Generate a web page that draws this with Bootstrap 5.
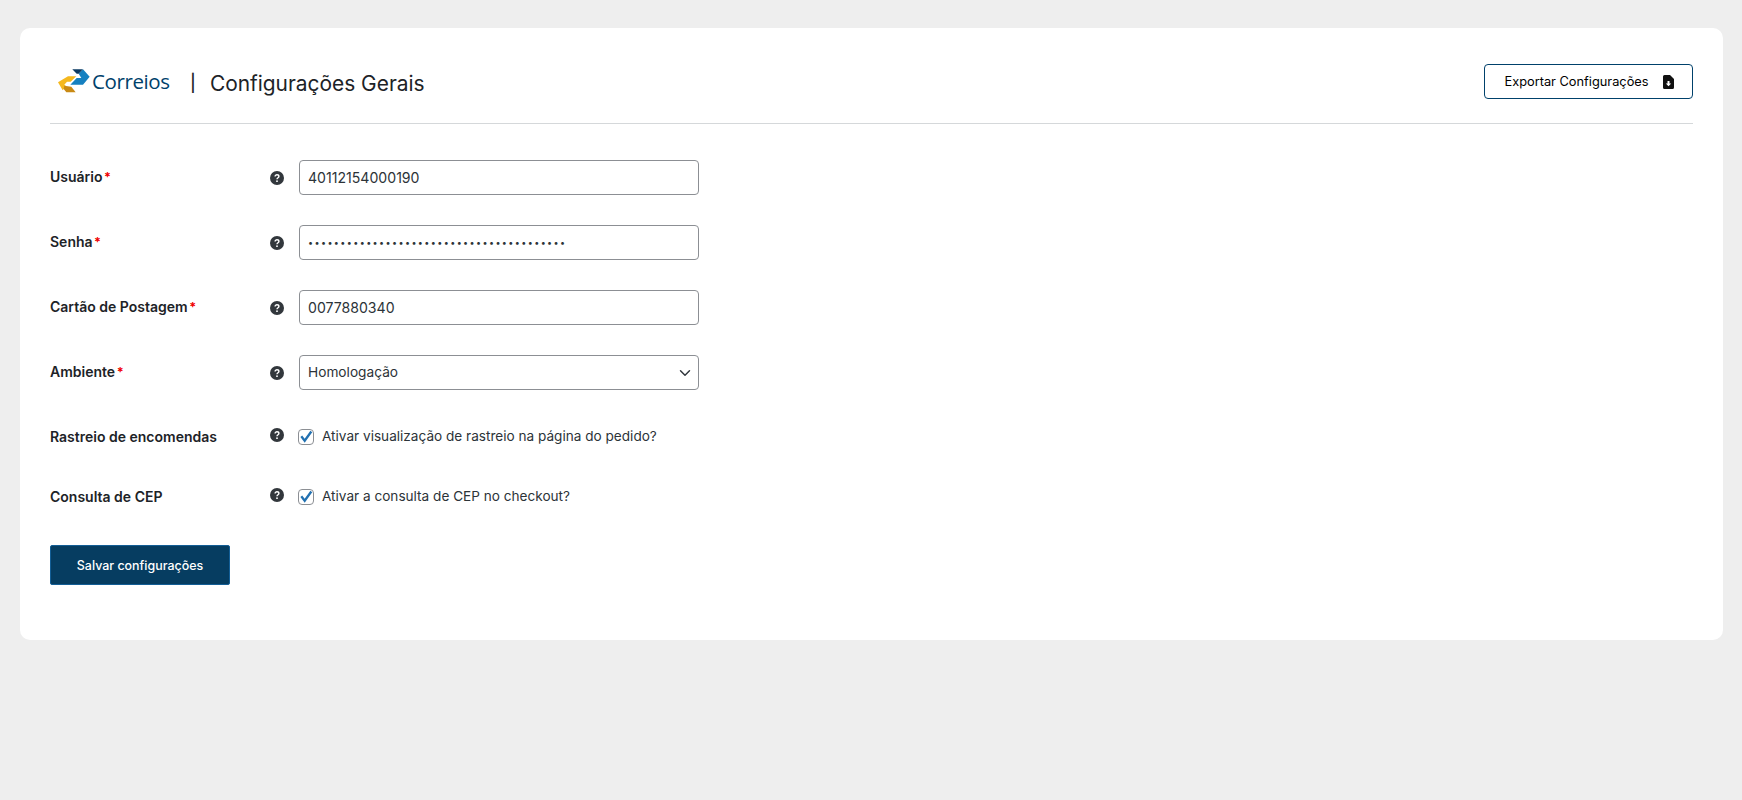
<!DOCTYPE html>
<html lang="pt-BR">
<head>
  <meta charset="utf-8">
  <meta name="viewport" content="width=device-width,initial-scale=1">
  <title>Correios | Configurações Gerais</title>
  <link href="https://cdn.jsdelivr.net/npm/bootstrap@5.3.0/dist/css/bootstrap.min.css" rel="stylesheet">
  <style>
    body { background: #eeeeee; font-family: Inter, "Liberation Sans", sans-serif; font-size: 14px; color: #1d2327; padding: 28px 19px 0 20px; }
    .settings-box { background: #fff; border-radius: 10px; height: 612px; padding: 0 30px; }
    .settings-head { height: 96px; border-bottom: 1px solid #d5d8da; padding-top: 13px; }
    .logo-word { font-family: "Open Sans", sans-serif; font-weight: 500; font-size: 20.5px; letter-spacing: -.4px; color: #00416b; margin-left: 2px; line-height: 1; }
    .logo-wrap { width: 120px; padding-left: 8px; margin: -2px 20px 0 0; }
    .head-sep { font-size: 17px; margin: 3px 14px 0 0; color: #1d2327; font-weight: 500; }
    .head-title { font-size: 20.9px; font-weight: 400; margin: 3px 0 0; color: #1d2327; }
    .btn-export { width: 209px; height: 35px; padding-left: 1px !important; font-size: 12.8px; color: #000; background: #fff; border: 1px solid #00416b; border-radius: 4px; margin-top: -1px; }
    .field-list { padding-top: 36px; }
    .field-row { height: 65px; }
    .field-row.check-row { height: 60px; }
    .field-label { width: 220px; font-weight: 600; font-size: 14px; padding-top: 6px; color: #1d2327; }
    .req { color: #f00000; margin-left: 1.500px; font-size: 12.500px; font-weight: 700; }
    .help-cell { width: 29px; padding-top: 11px; }
    .help-dot { width: 14px; height: 14px; display: block; }
    .field-input, .field-input:focus { width: 400px; height: 35px; border: 1px solid #8c8f94; border-radius: 4px; padding: 0 8px; font-size: 14.1px; color: #2c3338; box-shadow: none; }
    .field-input[type=password] { letter-spacing: 1.400px; font-size: 9px; }
    .form-select.field-input { padding: 0 8px; font-size: 13.7px; background-position: right 5px center; background-size: 16px 12px; }
    .check-row .help-cell { padding-top: 8px; }
    .check-box { width: 16px; height: 16px; border: 1px solid #8c8f94; border-radius: 4px; margin: 9px 0 0 -1px; flex: none; display: block; }
    .check-text { margin: 6px 0 0 8px; font-size: 13.6px; color: #2c3338; }
    .btn-save { width: 180px; height: 40px; margin-top: 5px; padding-top: 2px !important; font-size: 12.45px; font-weight: 500; color: #fff; background: #063d61; border: 1px solid #135e96; border-radius: 2px; }
    .btn-save:hover { color: #fff; background: #063d61; }
    .gap-export { gap: 14px; }
  </style>
</head>
<body>
  <div class="settings-box">
    <div class="settings-head d-flex justify-content-between align-items-center">
      <div class="d-flex align-items-center">
        <div class="logo-wrap d-flex align-items-center">
          <svg width="32" height="24" viewBox="0 0 96 72" class="flex-shrink-0">
            <path d="M0 40 30 22H55L38 38H27L19 47 25 52 14 64z" fill="#f5b81e"/>
            <path d="M19 50 40 53 53 70H25L17 60z" fill="#c98a14"/>
            <path d="M75 1 95 23 75 47H37L56 27H70L62 14z" fill="#1580c0"/>
            <path d="M43 1H75L62 14H56z" fill="#0b3a63"/>
          </svg>
          <span class="logo-word">Correios</span>
        </div>
        <span class="head-sep">|</span>
        <h1 class="head-title">Configurações Gerais</h1>
      </div>
      <button type="button" class="btn btn-export d-flex align-items-center justify-content-center gap-export p-0">
        Exportar Configurações
        <svg width="11" height="14" viewBox="0 0 11 14"><path d="M1.500 0H7l4 4v8.500a1.500 1.500 0 0 1-1.500 1.500h-8A1.500 1.500 0 0 1 0 12.500V1.500A1.500 1.500 0 0 1 1.500 0z" fill="#111"/><path d="M4.500 6h2v2.500h1.700L5.500 11.300 2.800 8.500h1.700z" fill="#fff"/></svg>
      </button>
    </div>

    <form class="field-list">
      <div class="field-row d-flex">
        <div class="field-label">Usuário<span class="req">*</span></div>
        <div class="help-cell"><svg class="help-dot" viewBox="0 0 14 14"><use href="#help"/></svg></div>
        <input class="form-control field-input" type="text" value="40112154000190">
      </div>
      <div class="field-row d-flex">
        <div class="field-label">Senha<span class="req">*</span></div>
        <div class="help-cell"><svg class="help-dot" viewBox="0 0 14 14"><use href="#help"/></svg></div>
        <input class="form-control field-input" type="password" value="abcdefghijabcdefghijabcdefghijabcdefghij">
      </div>
      <div class="field-row d-flex">
        <div class="field-label">Cartão de Postagem<span class="req">*</span></div>
        <div class="help-cell"><svg class="help-dot" viewBox="0 0 14 14"><use href="#help"/></svg></div>
        <input class="form-control field-input" type="text" value="0077880340">
      </div>
      <div class="field-row d-flex">
        <div class="field-label">Ambiente<span class="req">*</span></div>
        <div class="help-cell"><svg class="help-dot" viewBox="0 0 14 14"><use href="#help"/></svg></div>
        <select class="form-select field-input"><option>Homologação</option><option>Produção</option></select>
      </div>
      <div class="field-row check-row d-flex">
        <div class="field-label">Rastreio de encomendas</div>
        <div class="help-cell"><svg class="help-dot" viewBox="0 0 14 14"><use href="#help"/></svg></div>
        <svg class="check-box" viewBox="0 0 14 14"><use href="#tick"/></svg>
        <p class="check-text">Ativar visualização de rastreio na página do pedido?</p>
      </div>
      <div class="field-row check-row d-flex">
        <div class="field-label">Consulta de CEP</div>
        <div class="help-cell"><svg class="help-dot" viewBox="0 0 14 14"><use href="#help"/></svg></div>
        <svg class="check-box" viewBox="0 0 14 14"><use href="#tick"/></svg>
        <p class="check-text">Ativar a consulta de CEP no checkout?</p>
      </div>
      <button type="button" class="btn btn-save p-0">Salvar configurações</button>
    </form>
  </div>

  <svg width="0" height="0" class="d-block">
    <symbol id="help" viewBox="0 0 14 14">
      <circle cx="7" cy="7" r="7" fill="#32373c"/>
      <path d="M5.100 5.500C5.100 4.500 6 3.800 7 3.800s1.900 .7 1.900 1.600c0 1.400-1.900 1.400-1.900 2.900" fill="none" stroke="#fff" stroke-width="1.400"/>
      <circle cx="7" cy="10.200" r=".9" fill="#fff"/>
    </symbol>
    <symbol id="tick" viewBox="0 0 14 14">
      <path d="M2.300 6.300 5.700 10.700 12.300 1.500" fill="none" stroke="#2271b1" stroke-width="2.300"/>
    </symbol>
  </svg>

  <script src="https://cdn.jsdelivr.net/npm/bootstrap@5.3.0/dist/js/bootstrap.bundle.min.js"></script>
</body>
</html>
